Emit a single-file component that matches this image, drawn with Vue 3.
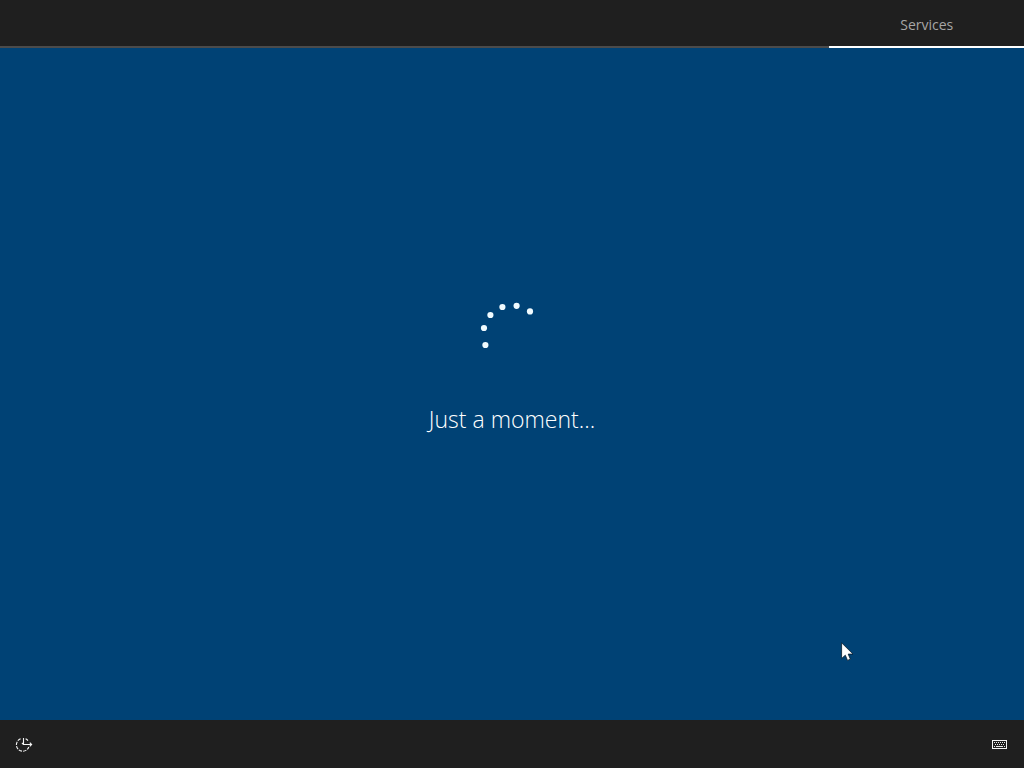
<script setup>
const dots = [
  { x: 5.4, y: 45 },
  { x: 4, y: 28 },
  { x: 10.4, y: 15 },
  { x: 22.4, y: 7 },
  { x: 36.6, y: 5.8 },
  { x: 50, y: 11.4 },
]
const keyRows = [
  { y: 3, keys: [2, 4, 6, 8, 10, 12] },
  { y: 5, keys: [3, 5, 7, 9, 11] },
]
</script>

<template>
  <div class="setup">
    <header class="steps">
      <nav class="track" aria-label="Setup steps">
        <a class="step" href="#services" aria-current="step">Services</a>
      </nav>
    </header>

    <main class="stage" role="status">
      <svg class="spinner" width="64" height="64" viewBox="0 0 64 64" aria-hidden="true">
        <circle v-for="(dot, i) in dots" :key="i" :cx="dot.x" :cy="dot.y" r="3.1" fill="#f0fbff" />
      </svg>
      <p class="message">Just a moment...</p>
    </main>

    <footer class="tools">
      <button class="tool" type="button" aria-label="Ease of Access">
        <svg width="18" height="18" viewBox="0 0 18 18" fill="none" stroke="#f4f4f4" stroke-width="1.1">
          <path d="M8.5 3V9.5H16.6M14.8 7.7L16.6 9.5L14.8 11.3M6.9 7.9L8.5 9.5" />
          <path d="M5.6 3.8A6.4 6.4 0 1 0 13.8 12" stroke-dasharray="3.4 1.1" />
          <path d="M10.6 3.8A6.4 6.4 0 0 1 13 5.6" />
        </svg>
      </button>
      <button class="tool" type="button" aria-label="On-screen keyboard">
        <svg width="16" height="10" viewBox="0 0 16 10" shape-rendering="crispEdges">
          <rect x="0.5" y="1.5" width="14" height="8" fill="none" stroke="#f4f4f4" />
          <g fill="#e8e8e8">
            <template v-for="row in keyRows" :key="row.y">
              <rect v-for="x in row.keys" :key="x" :x="x" :y="row.y" width="1" height="1" />
            </template>
            <rect x="2" y="7" width="1" height="1" />
            <rect x="4" y="7" width="7" height="1" />
            <rect x="12" y="7" width="1" height="1" />
          </g>
        </svg>
      </button>
    </footer>

    <svg class="pointer" width="14" height="20" viewBox="0 0 14 20" aria-hidden="true">
      <path d="M0.6 0.8V16.5L4.3 13.2L6.5 18.4L9.4 17.2L7.2 12.1H12Z" fill="#fff" stroke="#061a2c" stroke-width="0.8" />
    </svg>
  </div>
</template>

<style>
body {
  margin: 0;
  background: #004275;
}
</style>

<style scoped>
.setup {
  position: relative;
  display: flex;
  flex-direction: column;
  min-height: 100vh;
  overflow: hidden;
  background: #004275;
  color: #fff;
  font-family: "Open Sans", "Noto Sans", sans-serif;
}

.steps {
  background: #1f1f1f;
}

.track {
  display: flex;
  justify-content: flex-end;
  box-shadow: inset 0 -2px #4b4b4b;
}

.step {
  box-sizing: border-box;
  width: 19%;
  padding: 16px 0 12px;
  border-bottom: 2px solid #fff;
  color: #a6a6a6;
  font-size: 14px;
  line-height: 18px;
  text-align: center;
  text-decoration: none;
}

.stage {
  flex: 1;
  display: flex;
  flex-direction: column;
  align-items: center;
  justify-content: center;
  gap: 40px;
  padding-bottom: 34px;
}

.spinner {
  display: block;
}

.message {
  margin: 0;
  font-size: 23px;
  font-weight: 300;
  line-height: 30px;
}

.tools {
  display: flex;
  align-items: center;
  justify-content: space-between;
  height: 48px;
  background: #1f1f1f;
}

.tool {
  display: flex;
  align-items: center;
  justify-content: center;
  width: 48px;
  height: 48px;
  padding: 0;
  border: 0;
  background: transparent;
}

.pointer {
  position: absolute;
  left: 841px;
  top: 642px;
}
</style>
